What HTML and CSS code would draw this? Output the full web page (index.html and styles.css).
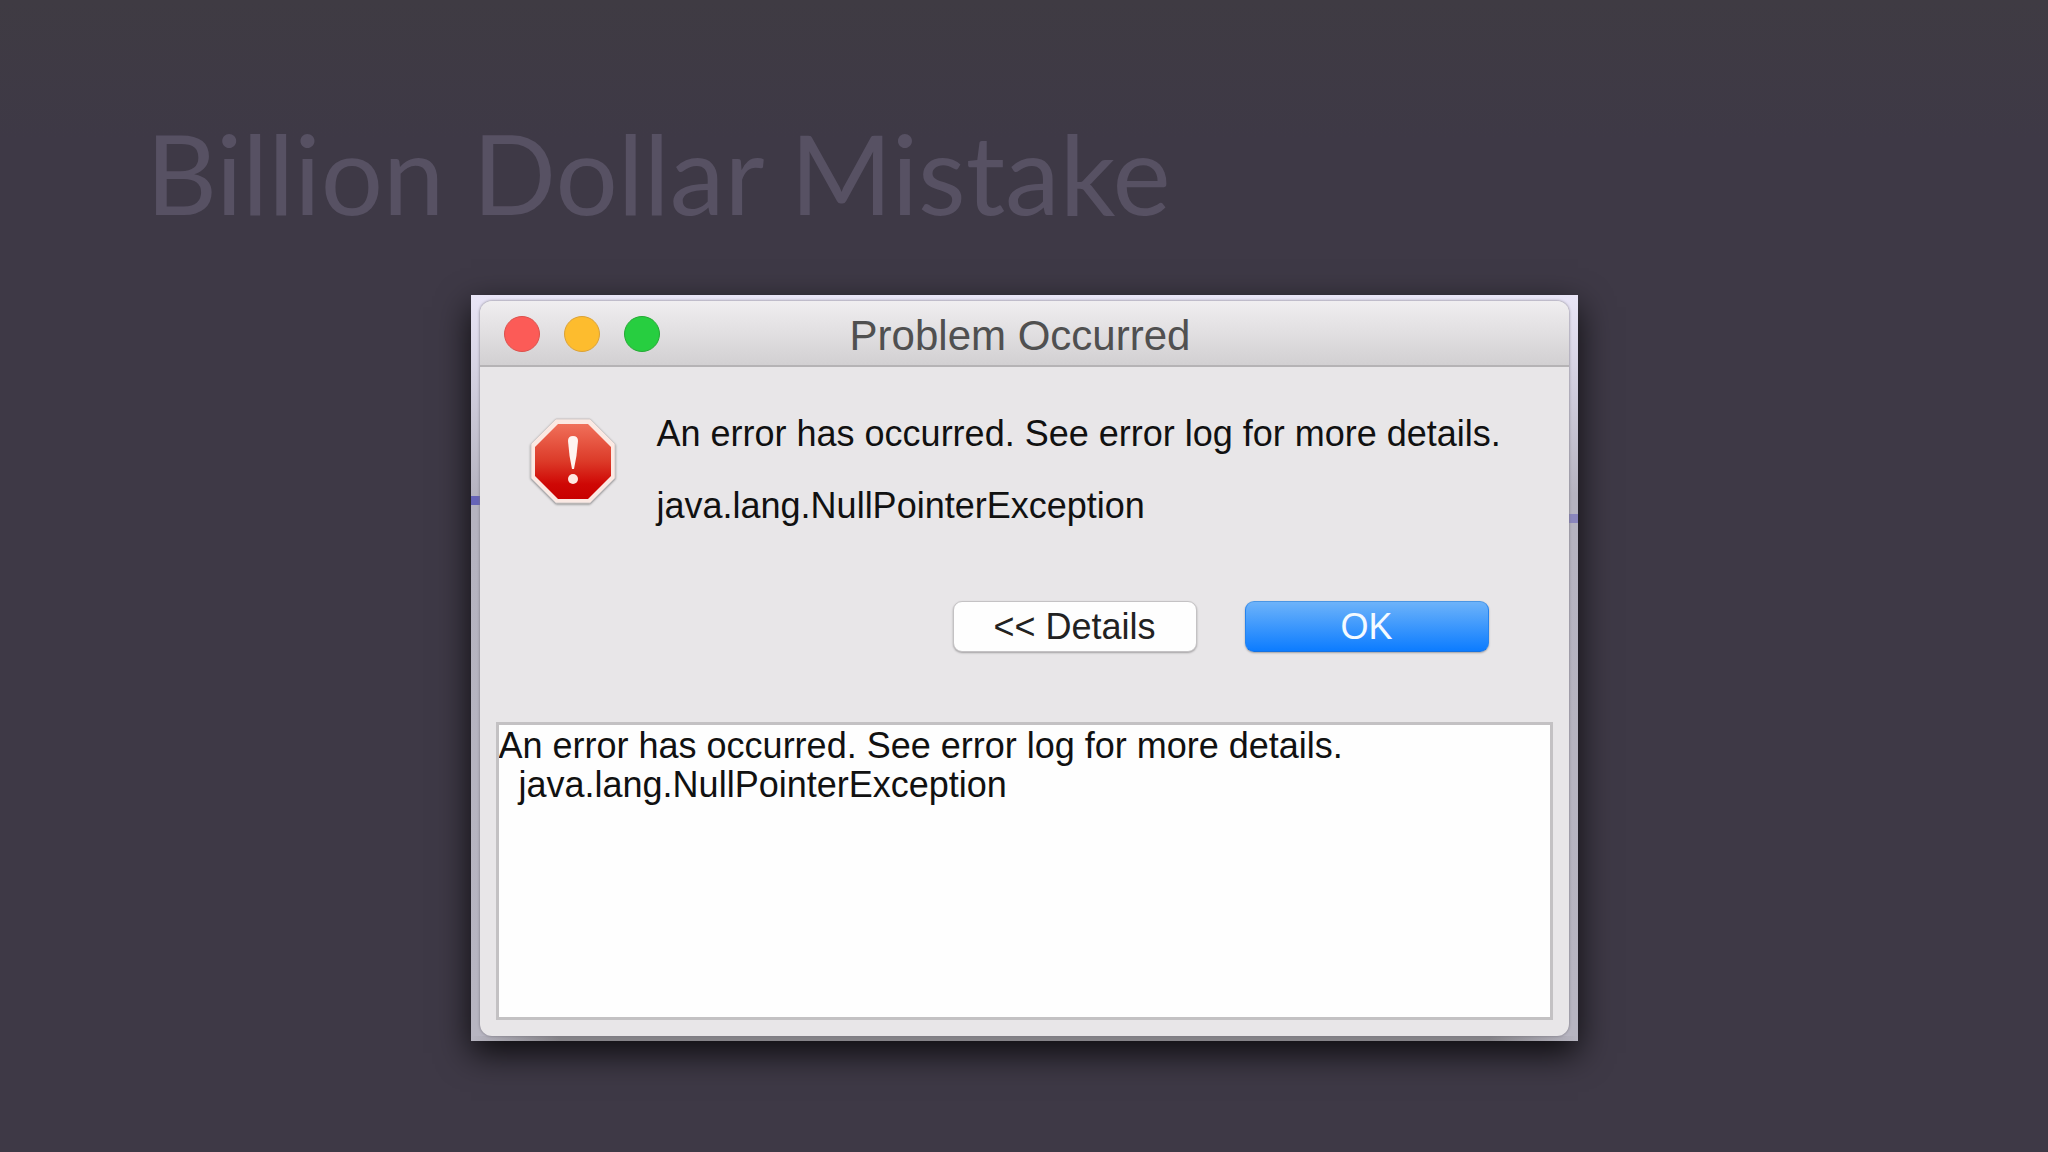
FILE: index.html
```html
<!DOCTYPE html>
<html lang="en">
<head>
    <meta charset="UTF-8">
    <meta name="viewport" content="width=device-width, initial-scale=1.0">
    <title>Billion Dollar Mistake</title>
    <link rel="stylesheet" href="styles.css">
</head>
<body>

<main class="slide">
    <h1>Billion Dollar Mistake</h1>

    <div class="frame">
        <section class="dialog" role="dialog" aria-labelledby="dialog-title">
            <header class="titlebar">
                <div class="lights">
                    <button class="light close" aria-label="Close"></button>
                    <button class="light minimize" aria-label="Minimize"></button>
                    <button class="light zoom" aria-label="Zoom"></button>
                </div>
                <h2 id="dialog-title">Problem Occurred</h2>
            </header>

            <div class="message">
                <svg class="error-icon" viewBox="0 0 86 86" aria-hidden="true">
                    <defs>
                        <linearGradient id="red" x1="0" y1="0" x2="0" y2="1">
                            <stop offset="0" stop-color="#f0705a"/>
                            <stop offset="0.5" stop-color="#dc3a28"/>
                            <stop offset="0.8" stop-color="#cf0805"/>
                            <stop offset="1" stop-color="#c80000"/>
                        </linearGradient>
                    </defs>
                    <path d="M26 1H60L85 26V60L60 85H26L1 60V26Z" fill="#fbe9e3" stroke="#d2cbca" stroke-width="1"/>
                    <path d="M28 6H58L81 29V58L58 81H28L5 58V29Z" fill="url(#red)"/>
                    <path d="M38 23Q38 18 43 18Q48 18 48 23Q47 38 44 51H42Q39 38 38 23Z" fill="#fff4f0"/>
                    <circle cx="43" cy="61" r="5" fill="#ffe9e2"/>
                </svg>
                <div class="text">
                    <p>An error has occurred. See error log for more details.</p>
                    <p>java.lang.NullPointerException</p>
                </div>
            </div>

            <div class="actions">
                <button class="btn">&lt;&lt; Details</button>
                <button class="btn primary">OK</button>
            </div>

            <textarea class="details" aria-label="Error details" readonly spellcheck="false">An error has occurred. See error log for more details.
  java.lang.NullPointerException</textarea>
        </section>
    </div>
</main>

</body>
</html>
```

FILE: styles.css
```css
* {
    margin: 0;
    padding: 0;
    box-sizing: border-box;
}

body {
    background: #3e3946;
    font-family: "Liberation Sans", Arial, sans-serif;
}

.slide {
    min-height: 100vh;
    padding: 106px 146px;
    background: linear-gradient(#3f3b43, #3e3946 140px);
}

h1 {
    height: 189px;
    font-family: Lato, sans-serif;
    font-size: 110px;
    font-weight: 400;
    line-height: 132px;
    color: #575163;
}

/* strip of desktop visible around the window */
.frame {
    width: 1107px;
    max-width: 100%;
    margin: 0 auto;
    padding: 6px 9px 5px;
    background:
        linear-gradient(#6664b8, #6664b8) 0 201px / 9px 9px no-repeat,
        linear-gradient(#8a86bd, #8a86bd) 100% 219px / 9px 9px no-repeat,
        linear-gradient(90deg, transparent, #858388 8%, #858388 92%, transparent) 0 100% / 100% 5px no-repeat,
        linear-gradient(#e9e5f7, #b5b3c0 200px, #b7b5c1);
    box-shadow: 0 12px 32px rgba(0, 0, 0, 0.8);
}

.dialog {
    background: #e8e6e8;
    border-radius: 12px;
    padding-bottom: 16px;
    box-shadow: 0 0 3px #77747e;
}

.titlebar {
    display: grid;
    grid-template-columns: 1fr auto 1fr;
    align-items: center;
    height: 66px;
    padding: 2px 32px 0 24px;
    border-bottom: 2px solid #b5b3b5;
    border-radius: 12px 12px 0 0;
    background: linear-gradient(#f0eef0, #d2d0d2);
}

.titlebar h2 {
    padding-top: 4px;
    font-size: 42px;
    font-weight: 400;
    line-height: 48px;
    color: #505050;
}

.lights {
    display: flex;
    gap: 24px;
}

.light {
    width: 36px;
    height: 36px;
    border-radius: 50%;
}

.close {
    background: #fc5b57;
    border: 1px solid #dc514c;
}

.minimize {
    background: #fdbc2e;
    border: 1px solid #dba237;
}

.zoom {
    background: #27ce40;
    border: 1px solid #25a935;
}

.message {
    display: flex;
    gap: 41px;
    padding: 47px 50px 0;
}

.error-icon {
    flex: none;
    width: 86px;
    height: 86px;
    margin-top: 4px;
    filter: drop-shadow(0 1px 1px rgba(0, 0, 0, 0.4));
}

.text {
    display: grid;
    gap: 32px;
    font-size: 36px;
    line-height: 40px;
    color: #111;
}

.actions {
    display: flex;
    justify-content: flex-end;
    gap: 48px;
    padding: 75px 80px 70px;
}

.btn {
    width: 244px;
    height: 51px;
    border: 1px solid #c4c2c4;
    border-radius: 9px;
    background: #fefefe;
    box-shadow: 0 1px 2px rgba(0, 0, 0, 0.3);
    font-family: inherit;
    font-size: 36px;
    line-height: 40px;
    color: #222;
}

.primary {
    border-color: #4b96e4 #2583ee #1672e0;
    background: linear-gradient(#6db3fa, #0c7cff);
    color: #f4faff;
}

.details {
    display: block;
    width: calc(100% - 32px);
    height: 298px;
    margin: 0 16px;
    padding: 1px 0;
    border: 3px solid #c3c1c3;
    outline: none;
    resize: none;
    background: #fefefe;
    font-family: inherit;
    font-size: 36px;
    line-height: 39px;
    color: #111;
}
```
